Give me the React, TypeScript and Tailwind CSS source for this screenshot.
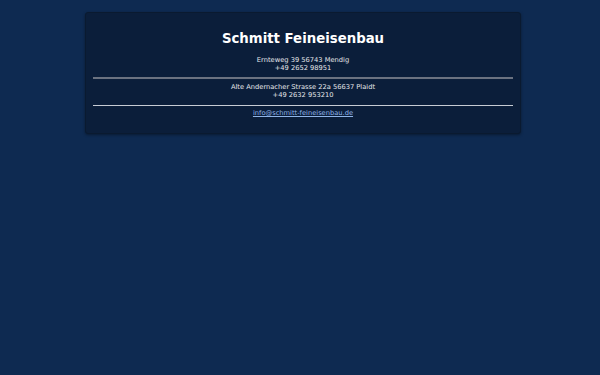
export default function App() {
  return (
    <div className="min-h-[375px] bg-[#0e2a51] pt-[12px] font-['DejaVu_Sans',sans-serif] text-white">
      <div className="ml-[85px] w-[436px] rounded-[3px] border border-[#0a1a30] bg-[#0b1e3a] px-[7px] pb-[16px] pt-[17px] text-center shadow-[0_1px_3px_rgba(0,0,0,0.4)]">
        <h1 className="text-[13.3px] font-bold leading-[18px]">Schmitt Feineisenbau</h1>
        <p className="mt-[8px] text-[6.7px] leading-[8px] text-[#e5e7eb]">
          Ernteweg 39 56743 Mendig
          <br />
          +49 2652 98951
        </p>
        <hr className="mt-[5px] border-t-2 border-[#6b7280]" />
        <p className="mt-[4px] text-[6.7px] leading-[8px] text-[#e5e7eb]">
          Alte Andernacher Strasse 22a 56637 Plaidt
          <br />
          +49 2632 953210
        </p>
        <hr className="mt-[6px] border-[#c7ccd4]" />
        <a href="#" className="mt-[3px] block text-[6.7px] leading-[8px] text-[#8fb4e8] underline">
          info@schmitt-feineisenbau.de
        </a>
      </div>
    </div>
  );
}
